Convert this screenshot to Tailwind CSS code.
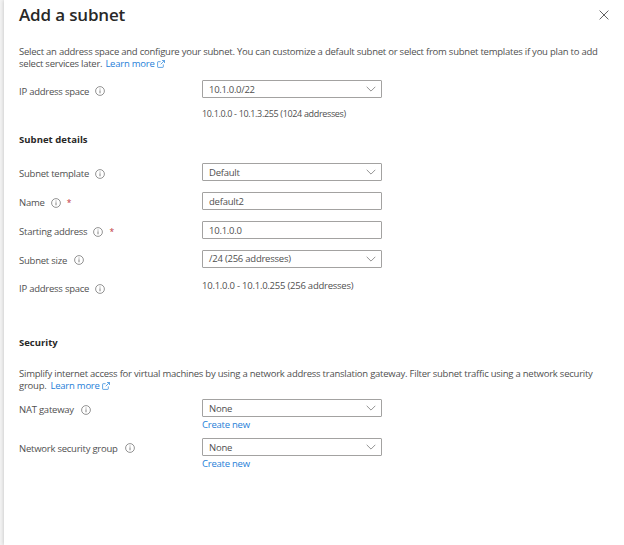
<!DOCTYPE html>
<html lang="en">
<head>
<meta charset="utf-8">
<title>Add a subnet</title>
<script src="https://cdn.jsdelivr.net/npm/@tailwindcss/browser@4"></script>
</head>
<body class="h-[545px] w-[624px] overflow-hidden bg-[#f3f3f3] font-['Open_Sans','Noto_Sans',sans-serif] text-[9.5px] leading-[12px] tracking-[-0.235px] text-[#505050]">
<svg class="hidden">
  <symbol id="info" viewBox="0 0 10 10"><circle cx="5" cy="5" r="4.4" fill="none" stroke="currentColor" stroke-width=".7"/><path d="M5 4.3V7.3M5 2.6V3.5" stroke="currentColor" stroke-width=".8"/></symbol>
  <symbol id="chevron" viewBox="0 0 10 6"><path d="M.7.8 5 5.1 9.3.8" fill="none" stroke="currentColor" stroke-width=".8"/></symbol>
  <symbol id="external" viewBox="0 0 8 8"><path d="M3.6 1.7H1.2q-.6 0-.6.6v4.5q0 .6.6.6h4.5q.6 0 .6-.6V4.4M5 .5h2.5V3M7.4.6 3.7 4.3" fill="none" stroke="currentColor" stroke-width=".7"/></symbol>
</svg>
<main class="ml-1 h-full bg-white pl-[15px] shadow-[0_0_4px_rgba(0,0,0,0.22)]">
  <header class="flex h-[46px] items-start justify-between pr-[15px]">
    <h1 class="pt-[5px] text-[17px] leading-5 font-semibold tracking-[-0.16px] text-[#292827]">Add a subnet</h1>
    <button aria-label="Close" class="mt-[10px] text-[#505050]"><svg class="size-[10px]" viewBox="0 0 10 10"><path d="M.6.6 9.4 9.4M9.4.6.6 9.4" stroke="currentColor" stroke-width=".9"/></svg></button>
  </header>
  <div class="h-[34px] whitespace-nowrap">
    <p>Select an address space and configure your subnet. You can customize a default subnet or select from subnet templates if you plan to add</p>
    <p class="flex">select services later.<a class="ml-[3px] flex items-center gap-[2px] text-[#1f80d8]">Learn more <svg class="size-2"><use href="#external"/></svg></a></p>
  </div>
  <div class="flex h-[53px]">
    <div class="flex h-[22px] w-[183px] items-center gap-[6px]"><span class="pt-px">IP address space</span><svg class="size-[10px] text-[#666]"><use href="#info"/></svg></div>
    <div>
      <div class="flex h-[18px] w-[180px] items-center justify-between rounded-[1px] border border-[#a3a2a1] pr-[5px] pl-1.5"><span class="pt-px tracking-[-0.3px]">10.1.0.0/22</span><svg class="h-1.5 w-[10px] text-[#777]"><use href="#chevron"/></svg></div>
      <p class="mt-[10px] text-[9px] tracking-[-0.34px]">10.1.0.0 - 10.1.3.255 (1024 addresses)</p>
    </div>
  </div>
  <h2 class="h-[30px] pt-px font-bold tracking-[0.05px] text-[#292827]">Subnet details</h2>
  <div class="flex h-[29px]">
    <div class="flex h-[21px] w-[183px] items-center gap-[6px]"><span class="pt-px">Subnet template</span><svg class="size-[10px] text-[#666]"><use href="#info"/></svg></div>
    <div class="flex h-[18px] w-[180px] items-center justify-between rounded-[1px] border border-[#a3a2a1] pr-[5px] pl-1.5"><span class="pt-px">Default</span><svg class="h-1.5 w-[10px] text-[#777]"><use href="#chevron"/></svg></div>
  </div>
  <div class="flex h-[29px]">
    <div class="flex h-[21px] w-[183px] items-center gap-[6px]"><span class="pt-px">Name</span><svg class="size-[10px] text-[#666]"><use href="#info"/></svg><span class="text-[8.5px] text-[#c0353b]">*</span></div>
    <div class="flex h-[18px] w-[180px] items-center rounded-[1px] border border-[#a3a2a1] pt-px pl-1.5">default2</div>
  </div>
  <div class="flex h-[29px]">
    <div class="flex h-[21px] w-[183px] items-center gap-[6px]"><span class="pt-px">Starting address</span><svg class="size-[10px] text-[#666]"><use href="#info"/></svg><span class="text-[8.5px] text-[#c0353b]">*</span></div>
    <div class="flex h-[18px] w-[180px] items-center rounded-[1px] border border-[#a3a2a1] pt-px pl-1.5">10.1.0.0</div>
  </div>
  <div class="flex h-[29px]">
    <div class="flex h-5 w-[183px] items-center gap-[7px]"><span class="pt-px">Subnet size</span><svg class="size-[10px] text-[#666]"><use href="#info"/></svg></div>
    <div class="flex h-[18px] w-[180px] items-center justify-between rounded-[1px] border border-[#a3a2a1] pr-[5px] pl-1.5"><span>/24 (256 addresses)</span><svg class="h-1.5 w-[10px] text-[#777]"><use href="#chevron"/></svg></div>
  </div>
  <div class="flex h-[57px]">
    <div class="flex h-5 w-[183px] items-center gap-[6px]"><span>IP address space</span><svg class="size-[10px] text-[#666]"><use href="#info"/></svg></div>
    <p class="pt-px">10.1.0.0 - 10.1.0.255 (256 addresses)</p>
  </div>
  <h2 class="h-[32px] pt-px font-bold tracking-[0px] text-[#292827]">Security</h2>
  <div class="h-[31px] whitespace-nowrap">
    <p>Simplify internet access for virtual machines by using a network address translation gateway. Filter subnet traffic using a network security</p>
    <p class="flex">group.<a class="ml-[4px] flex items-center gap-[2px] text-[#1f80d8]">Learn more <svg class="size-2"><use href="#external"/></svg></a></p>
  </div>
  <div class="flex h-[39px]">
    <div class="flex h-[21px] w-[183px] items-center gap-[7px]"><span class="pt-px">NAT gateway</span><svg class="size-[10px] text-[#666]"><use href="#info"/></svg></div>
    <div>
      <div class="flex h-[18px] w-[180px] items-center justify-between rounded-[1px] border border-[#a3a2a1] pr-[5px] pl-1.5"><span class="pt-px">None</span><svg class="h-1.5 w-[10px] text-[#777]"><use href="#chevron"/></svg></div>
      <a class="mt-[2px] block text-[#1f80d8]">Create new</a>
    </div>
  </div>
  <div class="flex h-[39px]">
    <div class="flex h-5 w-[183px] items-center gap-[7px]"><span class="pt-px">Network security group</span><svg class="size-[10px] text-[#666]"><use href="#info"/></svg></div>
    <div>
      <div class="flex h-[18px] w-[180px] items-center justify-between rounded-[1px] border border-[#a3a2a1] pr-[5px] pl-1.5"><span class="pt-px">None</span><svg class="h-1.5 w-[10px] text-[#777]"><use href="#chevron"/></svg></div>
      <a class="mt-[2px] block text-[#1f80d8]">Create new</a>
    </div>
  </div>
</main>
</body>
</html>
